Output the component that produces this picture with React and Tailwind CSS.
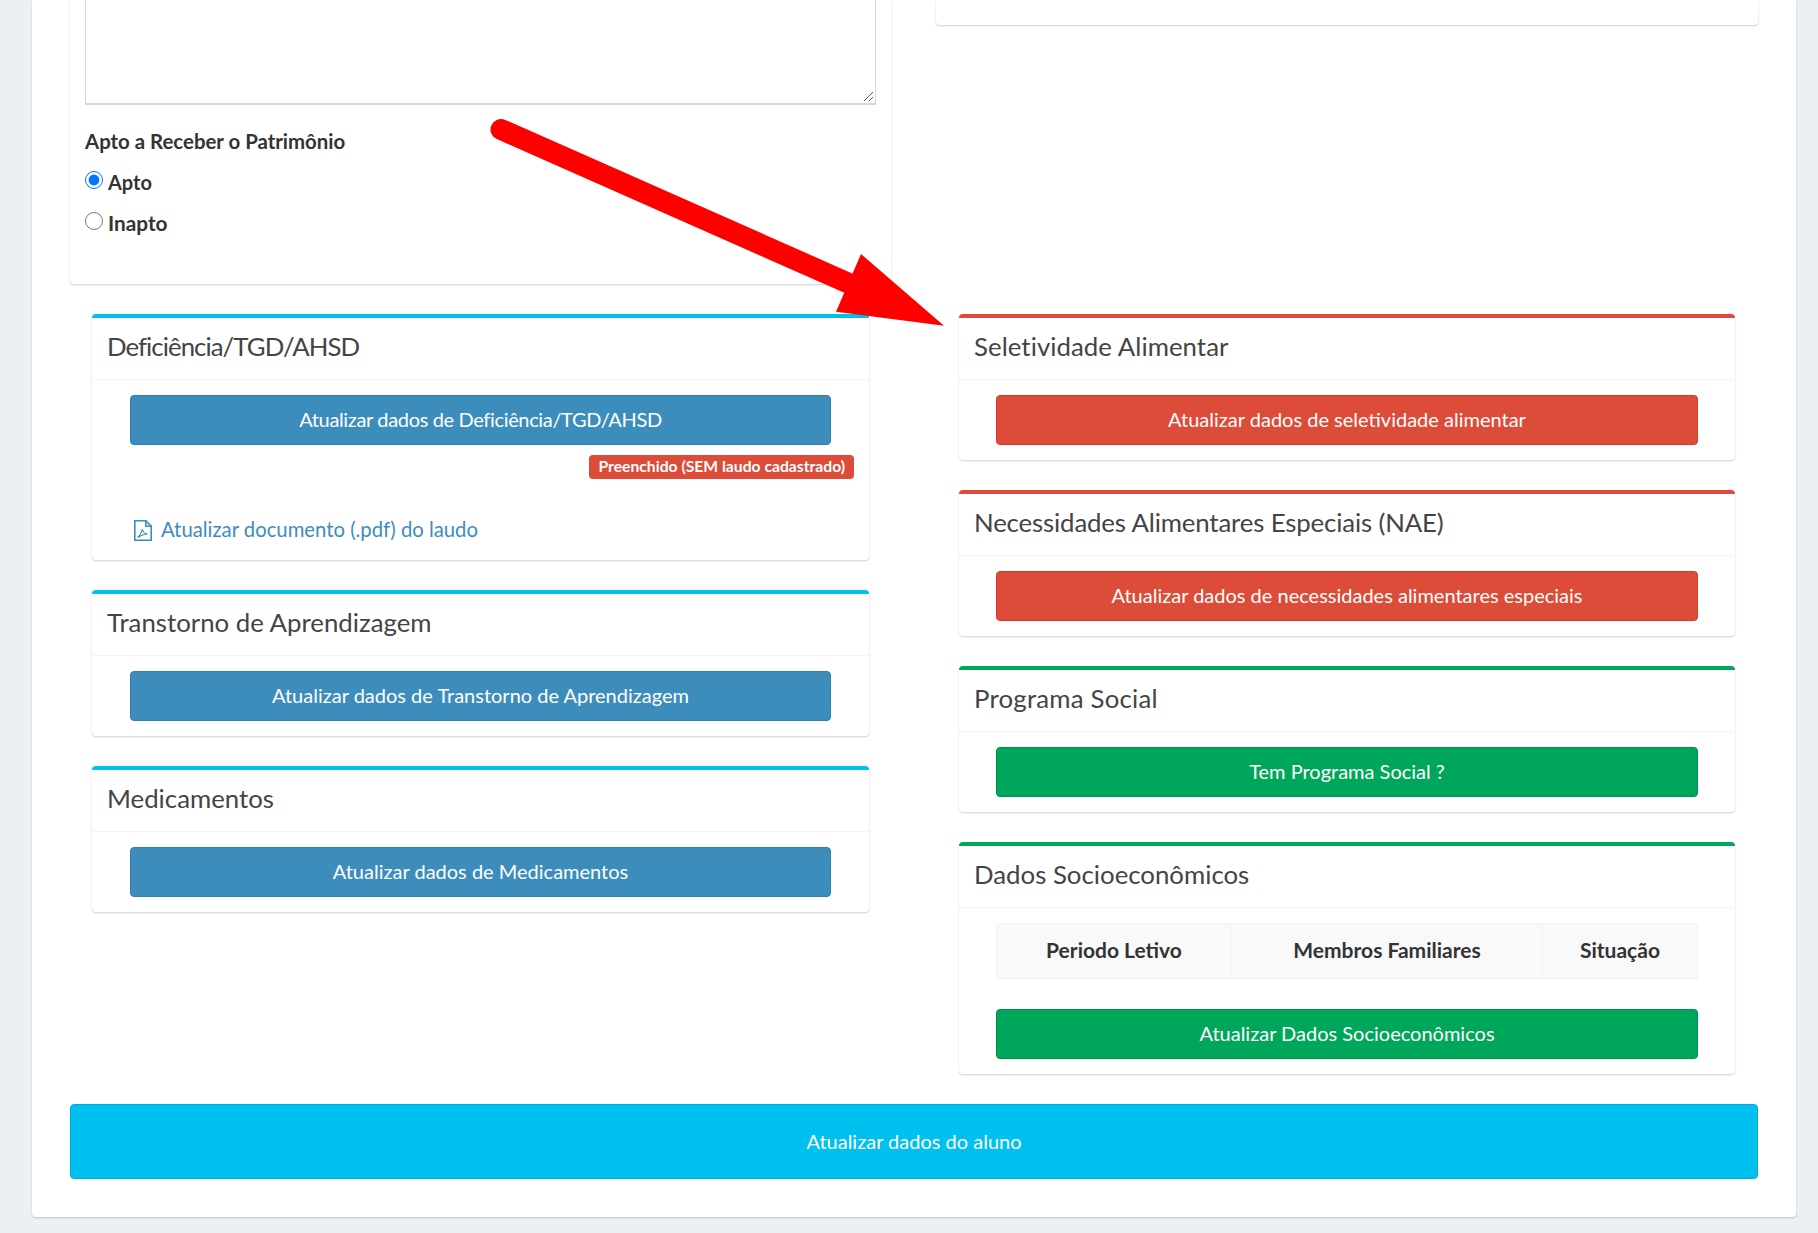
const font = "font-['Lato',sans-serif]"

function Panel({ accent, title, titleClass = '', pad = 'px-[38px]', children }) {
  return (
    <div className={`bg-white rounded-[4px] border-t-[4px] shadow-[0_1px_2px_rgba(0,0,0,0.2)] ${accent}`}>
      <div className="h-[62px] flex items-center px-[15px] pb-[5px] border-b border-[#f4f4f4]">
        <h3 className={`text-[25.8px] text-[#444] ${titleClass}`}>{title}</h3>
      </div>
      <div className={`pt-[15px] pb-[15px] ${pad}`}>{children}</div>
    </div>
  )
}

function Btn({ color, className = '', children }) {
  return (
    <button className={`w-full h-[50px] pb-[2px] rounded-[4px] border text-white text-[20px] ${color} ${className}`}>
      {children}
    </button>
  )
}

const blue = 'bg-[#3c8dbc] border-[#367fa9]'
const red = 'bg-[#dd4b39] border-[#d73925]'
const green = 'bg-[#00a65a] border-[#008d4c]'

export default function App() {
  return (
    <div className={`relative h-[1233px] overflow-hidden bg-[#ecf0f5] text-[#333] ${font}`}>
      <div className="ml-[32px] mr-[22px] h-[1217px] bg-white rounded-b-[4px] shadow-[0_1px_2px_rgba(0,0,0,0.2)] px-[38px]">
        <div className="grid grid-cols-[821px_822px] gap-x-[45px] h-[314px]">
          <div>
            <div className="h-[284px] bg-white rounded-b-[4px] shadow-[0_1px_2px_rgba(0,0,0,0.2)] px-[15px]">
              <div className="h-[105px] border-x border-b-2 border-[#d2d6de] relative">
                <svg className="absolute right-[1px] bottom-[1px]" width="12" height="12" viewBox="0 0 12 12" stroke="#555" fill="none">
                  <path d="M2 11 L11 2 M7 11 L11 7" />
                </svg>
              </div>
              <p className="mt-[25px] text-[20.4px] font-bold leading-[22px]">Apto a Receber o Patrimônio</p>
              <div className="mt-[19px] flex items-center h-[22px]">
                <input type="radio" name="apto" defaultChecked className="w-[18px] h-[18px] -mt-[4px] accent-[#0075ff]" />
                <span className="ml-[5px] text-[20px] font-bold">Apto</span>
              </div>
              <div className="mt-[19px] flex items-center h-[22px]">
                <input type="radio" name="apto" className="w-[18px] h-[18px] -mt-[4px]" />
                <span className="ml-[5px] text-[20.8px] font-bold">Inapto</span>
              </div>
            </div>
          </div>
          <div>
            <div className="h-[25px] bg-white rounded-b-[4px] shadow-[0_1px_2px_rgba(0,0,0,0.2)]" />
          </div>
        </div>

        <div className="grid grid-cols-[821px_822px] gap-x-[45px]">
          <div className="px-[22px] flex flex-col gap-[30px]">
            <Panel accent="border-[#00c0ef]" title="Deficiência/TGD/AHSD" titleClass="tracking-[-0.95px]">
              <Btn color={blue} className="tracking-[-0.35px]">Atualizar dados de Deficiência/TGD/AHSD</Btn>
              <div className="flex justify-end mt-[10px] -mr-[23px]">
                <span className="h-[24px] px-[9px] pb-[1px] flex items-center rounded-[4px] bg-[#dd4b39] text-white text-[15.7px] font-bold">
                  Preenchido (SEM laudo cadastrado)
                </span>
              </div>
              <a className="mt-[39px] mb-[3px] flex items-center h-[24px] ml-[4px] text-[#3c8dbc] text-[20.3px]">
                <svg width="18" height="21" viewBox="0 0 18 21" fill="none" stroke="#3c8dbc" strokeWidth="1.6">
                  <path d="M.8.8h11l5.400 5.400v14H.8z" />
                  <path d="M11.800.8v5.400h5.400" />
                  <path d="M3.500 17.500c2.500-2 4.200-5.500 4.700-8.500.6 2.800 2.300 4.600 5.300 5-3.500.2-7 1.500-10 3.500z" strokeWidth="1.100" />
                </svg>
                <span className="ml-[9px] -mt-[1px]">Atualizar documento (.pdf) do laudo</span>
              </a>
            </Panel>
            <Panel accent="border-[#00c0ef]" title="Transtorno de Aprendizagem">
              <Btn color={blue}>Atualizar dados de Transtorno de Aprendizagem</Btn>
            </Panel>
            <Panel accent="border-[#00c0ef]" title="Medicamentos">
              <Btn color={blue}>Atualizar dados de Medicamentos</Btn>
            </Panel>
          </div>
          <div className="px-[23px] flex flex-col gap-[30px]">
            <Panel accent="border-[#dd4b39]" pad="px-[37px]" title="Seletividade Alimentar" titleClass="tracking-[0.05px]">
              <Btn color={red}>Atualizar dados de seletividade alimentar</Btn>
            </Panel>
            <Panel accent="border-[#dd4b39]" pad="px-[37px]" title="Necessidades Alimentares Especiais (NAE)" titleClass="tracking-[-0.15px]">
              <Btn color={red}>Atualizar dados de necessidades alimentares especiais</Btn>
            </Panel>
            <Panel accent="border-[#00a65a]" pad="px-[37px]" title="Programa Social" titleClass="tracking-[0.2px]">
              <Btn color={green}>Tem Programa Social ?</Btn>
            </Panel>
            <Panel accent="border-[#00a65a]" pad="px-[37px]" title="Dados Socioeconômicos">
              <table className="w-full table-fixed border border-[#f4f4f4] bg-[#f9f9f9] text-[21px] font-bold mb-[30px]">
                <thead>
                  <tr className="h-[55px]">
                    <th className="w-[235px] pb-[3px] border-r border-[#f4f4f4]">Periodo Letivo</th>
                    <th className="w-[311px] pb-[3px] border-r border-[#f4f4f4]">Membros Familiares</th>
                    <th className="pb-[3px]">Situação</th>
                  </tr>
                </thead>
              </table>
              <Btn color={green}>Atualizar Dados Socioeconômicos</Btn>
            </Panel>
          </div>
        </div>

        <button className="mt-[30px] w-full h-[75px] pb-[2px] rounded-[4px] border border-[#00acd6] bg-[#00c0ef] text-white text-[20px]">
          Atualizar dados do aluno
        </button>
      </div>

      {/* annotation arrow */}
      <svg className="absolute inset-0 pointer-events-none" width="1818" height="1233" viewBox="0 0 1818 1233">
        <path d="M501 129.500 L848 283" stroke="#ff0000" strokeWidth="21" strokeLinecap="round" />
        <polygon points="861,254 944,325.700 836,311.700" fill="#ff0000" />
      </svg>
    </div>
  )
}
